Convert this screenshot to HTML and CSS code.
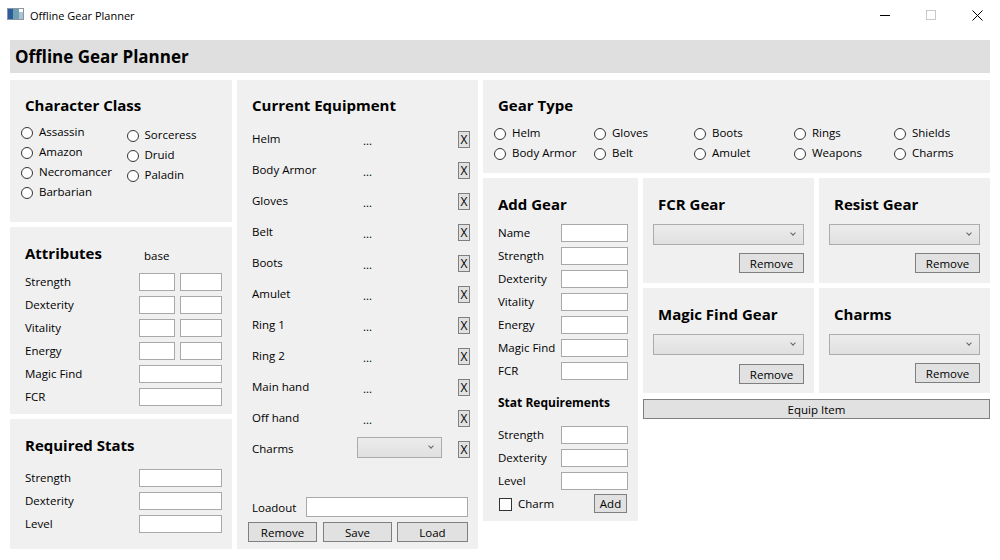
FILE: index.html
```html
<!DOCTYPE html>
<html>
<head>
<meta charset="utf-8">
<title>Offline Gear Planner</title>
<link rel="stylesheet" href="styles.css">
</head>
<body>
<div class="titlebar">
  <svg class="appicon" viewBox="0 0 17 12" width="17" height="12">
    <rect x="0.5" y="0.5" width="16" height="11" fill="#ffffff" stroke="#8a96a3"/>
    <rect x="1" y="1" width="5" height="10" fill="#2d5c9e"/>
    <rect x="6" y="1" width="6" height="10" fill="#6f9fb0"/>
    <rect x="12" y="4" width="4" height="7" fill="#a9c3cf"/>
  </svg>
  <span class="wintitle">Offline Gear Planner</span>
  <div class="controls">
    <span class="ctl"><svg width="10" height="10" viewBox="0 0 10 10"><line x1="0" y1="5.5" x2="10" y2="5.5" stroke="#000" stroke-width="1"/></svg></span>
    <span class="ctl"><svg width="10" height="10" viewBox="0 0 10 10"><rect x="0.5" y="0.5" width="9" height="9" fill="none" stroke="#c8c8c8" stroke-width="1"/></svg></span>
    <span class="ctl"><svg width="11" height="11" viewBox="0 0 11 11"><path d="M0.5 0.5 L10.5 10.5 M10.5 0.5 L0.5 10.5" stroke="#000" stroke-width="1"/></svg></span>
  </div>
</div>

<div class="app">
  <div class="header">Offline Gear Planner</div>
  <div class="main">
    <div class="col col1">
      <section class="panel p-class">
        <div class="h">Character Class</div>
        <div class="radios2">
          <div class="rcol">
            <label class="radio"><span class="circle"></span>Assassin</label>
            <label class="radio"><span class="circle"></span>Amazon</label>
            <label class="radio"><span class="circle"></span>Necromancer</label>
            <label class="radio"><span class="circle"></span>Barbarian</label>
          </div>
          <div class="rcol rcol2">
            <label class="radio"><span class="circle"></span>Sorceress</label>
            <label class="radio"><span class="circle"></span>Druid</label>
            <label class="radio"><span class="circle"></span>Paladin</label>
          </div>
        </div>
      </section>

      <section class="panel p-attr">
        <div class="hrow"><div class="h hw">Attributes</div><span class="base">base</span></div>
        <div class="fgrid attr-grid">
          <span class="lbl">Strength</span><input class="tb" type="text"><input class="tb" type="text">
          <span class="lbl">Dexterity</span><input class="tb" type="text"><input class="tb" type="text">
          <span class="lbl">Vitality</span><input class="tb" type="text"><input class="tb" type="text">
          <span class="lbl">Energy</span><input class="tb" type="text"><input class="tb" type="text">
          <span class="lbl">Magic Find</span><input class="tb span2" type="text">
          <span class="lbl">FCR</span><input class="tb span2" type="text">
        </div>
      </section>

      <section class="panel p-req">
        <div class="h">Required Stats</div>
        <div class="fgrid req-grid">
          <span class="lbl">Strength</span><input class="tb" type="text">
          <span class="lbl">Dexterity</span><input class="tb" type="text">
          <span class="lbl">Level</span><input class="tb" type="text">
        </div>
      </section>
    </div>

    <div class="col col2">
      <section class="panel p-equip">
        <div class="h">Current Equipment</div>
        <div class="equip-list">
          <div class="erow"><span>Helm</span><span class="dots">...</span><button class="xbtn">X</button></div>
          <div class="erow"><span>Body Armor</span><span class="dots">...</span><button class="xbtn">X</button></div>
          <div class="erow"><span>Gloves</span><span class="dots">...</span><button class="xbtn">X</button></div>
          <div class="erow"><span>Belt</span><span class="dots">...</span><button class="xbtn">X</button></div>
          <div class="erow"><span>Boots</span><span class="dots">...</span><button class="xbtn">X</button></div>
          <div class="erow"><span>Amulet</span><span class="dots">...</span><button class="xbtn">X</button></div>
          <div class="erow"><span>Ring 1</span><span class="dots">...</span><button class="xbtn">X</button></div>
          <div class="erow"><span>Ring 2</span><span class="dots">...</span><button class="xbtn">X</button></div>
          <div class="erow"><span>Main hand</span><span class="dots">...</span><button class="xbtn">X</button></div>
          <div class="erow"><span>Off hand</span><span class="dots">...</span><button class="xbtn">X</button></div>
          <div class="erow"><span>Charms</span><div class="combo combo-eq"><span class="chev"></span></div><button class="xbtn">X</button></div>
        </div>
        <div class="loadout">
          <div class="lrow"><span class="lbl">Loadout</span><input class="tb tb-load" type="text"></div>
          <div class="brow">
            <button class="btn b-rem">Remove</button>
            <button class="btn b-save">Save</button>
            <button class="btn b-load">Load</button>
          </div>
        </div>
      </section>
    </div>

    <div class="col col3">
      <section class="panel p-type">
        <div class="h">Gear Type</div>
        <div class="type-grid">
          <label class="radio"><span class="circle"></span>Helm</label>
          <label class="radio"><span class="circle"></span>Gloves</label>
          <label class="radio"><span class="circle"></span>Boots</label>
          <label class="radio"><span class="circle"></span>Rings</label>
          <label class="radio"><span class="circle"></span>Shields</label>
          <label class="radio"><span class="circle"></span>Body Armor</label>
          <label class="radio"><span class="circle"></span>Belt</label>
          <label class="radio"><span class="circle"></span>Amulet</label>
          <label class="radio"><span class="circle"></span>Weapons</label>
          <label class="radio"><span class="circle"></span>Charms</label>
        </div>
      </section>

      <div class="lower">
        <section class="panel p-add">
          <div class="h">Add Gear</div>
          <div class="fgrid add-grid">
            <span class="lbl">Name</span><input class="tb" type="text">
            <span class="lbl">Strength</span><input class="tb" type="text">
            <span class="lbl">Dexterity</span><input class="tb" type="text">
            <span class="lbl">Vitality</span><input class="tb" type="text">
            <span class="lbl">Energy</span><input class="tb" type="text">
            <span class="lbl">Magic Find</span><input class="tb" type="text">
            <span class="lbl">FCR</span><input class="tb" type="text">
          </div>
          <div class="h2">Stat Requirements</div>
          <div class="fgrid add-grid">
            <span class="lbl">Strength</span><input class="tb" type="text">
            <span class="lbl">Dexterity</span><input class="tb" type="text">
            <span class="lbl">Level</span><input class="tb" type="text">
          </div>
          <div class="crow">
            <label class="check"><span class="box"></span>Charm</label>
            <button class="btn b-add">Add</button>
          </div>
        </section>

        <div class="right">
          <div class="gear-grid">
            <section class="panel p-list">
              <div class="h">FCR Gear</div>
              <div class="combo combo-list"><span class="chev"></span></div>
              <button class="btn b-remove">Remove</button>
            </section>
            <section class="panel p-list">
              <div class="h">Resist Gear</div>
              <div class="combo combo-list"><span class="chev"></span></div>
              <button class="btn b-remove">Remove</button>
            </section>
            <section class="panel p-list">
              <div class="h">Magic Find Gear</div>
              <div class="combo combo-list"><span class="chev"></span></div>
              <button class="btn b-remove b-low">Remove</button>
            </section>
            <section class="panel p-list">
              <div class="h">Charms</div>
              <div class="combo combo-list"><span class="chev"></span></div>
              <button class="btn b-remove">Remove</button>
            </section>
          </div>
          <button class="btn b-equip">Equip Item</button>
        </div>
      </div>
    </div>
  </div>
</div>
</body>
</html>
```

FILE: styles.css
```css
* { box-sizing: border-box; }
html, body { margin: 0; padding: 0; background: #ffffff; }
body {
  font-family: "Open Sans", "Noto Sans", sans-serif;
  font-size: 11.5px;
  color: #000;
  width: 1000px;
  height: 560px;
  overflow: hidden;
}

/* window title bar */
.titlebar { height: 30px; display: flex; align-items: center; }
.appicon { margin-left: 7px; margin-top: -2px; }
.wintitle { margin-left: 6px; font-size: 11px; color: #000; }
.controls { margin-left: auto; display: flex; height: 30px; }
.ctl { width: 46px; height: 30px; display: flex; align-items: center; justify-content: center; }

.app { padding: 10px; }
.header {
  height: 33px;
  background: #dfdfdf;
  padding-left: 5px;
  padding-top: 1px;
  line-height: 32px;
  font-size: 17px;
  font-weight: 700;
}
.main {
  display: grid;
  grid-template-columns: 222px 241px 507px;
  column-gap: 5px;
  margin-top: 7px;
}
.col { display: flex; flex-direction: column; }
.col1 { gap: 5px; }

.panel { background: #f0f0f0; }
.h { font-weight: 700; font-size: 15px; line-height: 20px; margin-left: 15px; white-space: nowrap; }
.h2 { font-weight: 700; font-size: 12px; line-height: 20px; margin-left: 15px; margin-top: 13px; white-space: nowrap; }
.lbl { line-height: 17px; white-space: nowrap; }

/* radio */
.radio { display: flex; align-items: center; height: 20px; line-height: 18px; white-space: nowrap; }
.circle {
  width: 12px; height: 12px; border-radius: 50%;
  border: 1px solid #333; background: #fff;
  margin-right: 6px; flex-shrink: 0;
  margin-top: 1px;
}
.check { display: flex; align-items: center; white-space: nowrap; line-height: 17px; }
.box { width: 13px; height: 13px; border: 1px solid #333; background: #fff; margin-right: 6px; margin-top: 1px; }

/* inputs */
.tb {
  display: block; margin: 0; padding: 0;
  width: 100%; height: 18px;
  border: 1px solid #a9a9a9; background: #fff;
  font: inherit; outline: none;
}
.btn {
  margin: 0; padding: 0;
  font-family: inherit; font-size: 11.5px; color: #000;
  background: #e1e1e1; border: 1px solid #7f7f7f;
  height: 20px; line-height: 17px;
}
.combo {
  border: 1px solid #acacac;
  background: linear-gradient(#ececec, #e0e0e0);
  display: flex; align-items: center; justify-content: flex-end;
  padding-right: 8px;
}
.chev {
  width: 4px; height: 4px;
  border-right: 1px solid #666; border-bottom: 1px solid #666;
  transform: rotate(45deg);
  margin-top: -3px;
}

/* character class */
.p-class { height: 142px; padding-top: 15px; }
.radios2 { display: flex; padding-left: 11px; margin-top: 7px; }
.rcol { width: 111px; }
.rcol2 { margin-top: 3px; }

/* attributes */
.p-attr { height: 187px; padding-top: 16px; }
.hrow { display: flex; height: 20px; }
.hw { width: 119px; flex-shrink: 0; }
.base { line-height: 20px; padding-top: 3px; }
.fgrid { display: grid; grid-auto-rows: 18px; row-gap: 5px; padding-left: 15px; }
.attr-grid { grid-template-columns: 109px 36px 42px; column-gap: 5px; margin-top: 10px; }
.span2 { grid-column: span 2; }

.p-req { height: 130px; padding-top: 16px; }
.req-grid { grid-template-columns: 114px 83px; margin-top: 14px; }

/* equipment */
.p-equip { height: 469px; padding-top: 15px; display: flex; flex-direction: column; }
.equip-list { margin-top: 8px; }
.erow {
  height: 31px;
  display: grid;
  grid-template-columns: 105px 101px 12px;
  align-items: center;
  padding-left: 15px;
  white-space: nowrap;
}
.dots { padding-left: 6px; padding-top: 3px; }
.xbtn {
  width: 12px; height: 17px; padding: 0; margin: 0;
  background: #e1e1e1; border: 1px solid #7f7f7f;
  font-family: inherit; font-size: 12px; line-height: 14px; color: #000;
  margin-top: 2px;
}
.combo-eq { width: 85px; height: 21px; margin-top: -2px; }
.loadout { margin-top: auto; padding-bottom: 7px; }
.lrow { display: flex; align-items: center; height: 20px; padding-left: 15px; }
.lrow .lbl { width: 54px; }
.tb-load { width: 162px; height: 20px; }
.brow { display: flex; margin-top: 5px; padding-left: 11px; }
.b-rem { width: 69px; }
.b-save { width: 69px; margin-left: 6px; }
.b-load { width: 71px; margin-left: 5px; }

/* gear type */
.p-type { height: 93px; padding-top: 15px; }
.type-grid {
  display: grid;
  grid-template-columns: repeat(5, 100px);
  grid-auto-rows: 20px;
  padding-left: 11px;
  margin-top: 8px;
}

.lower { display: flex; gap: 5px; margin-top: 5px; }
.p-add { width: 155px; height: 343px; padding-top: 16px; }
.add-grid { grid-template-columns: 63px 67px; margin-top: 10px; }
.h2 + .add-grid { margin-top: 13px; }
.crow { display: flex; align-items: center; height: 19px; margin-top: 4px; padding-left: 16px; padding-right: 11px; }
.b-add { width: 33px; height: 19px; margin-left: auto; line-height: 16px; }

.right { width: 347px; display: flex; flex-direction: column; }
.gear-grid { display: grid; grid-template-columns: 171px 171px; grid-auto-rows: 105px; gap: 5px; }
.p-list { padding-top: 16px; display: flex; flex-direction: column; }
.combo-list { width: 151px; height: 21px; margin-left: 10px; margin-top: 10px; }
.b-remove { width: 65px; align-self: flex-end; margin-right: 10px; margin-top: 8px; }
.b-low { margin-top: 9px; }
.b-equip { width: 347px; height: 20px; margin-top: 6px; }
```
